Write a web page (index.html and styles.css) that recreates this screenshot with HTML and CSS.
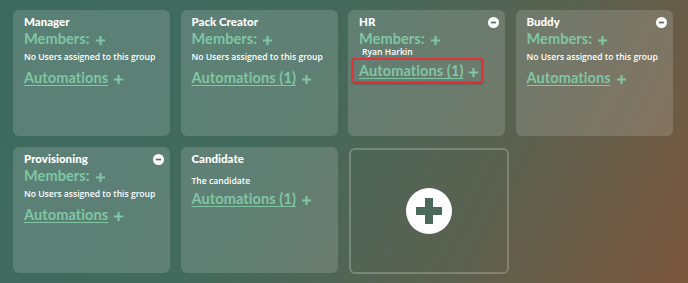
FILE: index.html
```html
<!DOCTYPE html>
<html lang="en">
<head>
  <meta charset="UTF-8" />
  <title>Groups</title>
  <link rel="stylesheet" href="styles.css">
</head>
<body>
  <main class="groups">

    <section class="group">
      <h3 class="group-title">Manager</h3>
      <div class="members">Members: <svg class="plus" viewBox="0 0 12 12"><path d="M6 1v10M1 6h10"/></svg></div>
      <p class="note">No Users assigned to this group</p>
      <div class="autos"><a href="#">Automations</a> <svg class="plus" viewBox="0 0 12 12"><path d="M6 1v10M1 6h10"/></svg></div>
    </section>

    <section class="group">
      <h3 class="group-title">Pack Creator</h3>
      <div class="members">Members: <svg class="plus" viewBox="0 0 12 12"><path d="M6 1v10M1 6h10"/></svg></div>
      <p class="note">No Users assigned to this group</p>
      <div class="autos"><a href="#">Automations (1)</a> <svg class="plus" viewBox="0 0 12 12"><path d="M6 1v10M1 6h10"/></svg></div>
    </section>

    <section class="group">
      <h3 class="group-title">HR</h3>
      <svg class="remove" viewBox="0 0 10 10"><circle cx="5" cy="5" r="5"/><path d="M2.6 5h4.8"/></svg>
      <div class="members">Members: <svg class="plus" viewBox="0 0 12 12"><path d="M6 1v10M1 6h10"/></svg></div>
      <p class="note user">Ryan Harkin</p>
      <div class="autos highlight"><a href="#">Automations (1)</a> <svg class="plus" viewBox="0 0 12 12"><path d="M6 1v10M1 6h10"/></svg></div>
    </section>

    <section class="group">
      <h3 class="group-title">Buddy</h3>
      <svg class="remove" viewBox="0 0 10 10"><circle cx="5" cy="5" r="5"/><path d="M2.6 5h4.8"/></svg>
      <div class="members">Members: <svg class="plus" viewBox="0 0 12 12"><path d="M6 1v10M1 6h10"/></svg></div>
      <p class="note">No Users assigned to this group</p>
      <div class="autos"><a href="#">Automations</a> <svg class="plus" viewBox="0 0 12 12"><path d="M6 1v10M1 6h10"/></svg></div>
    </section>

    <section class="group">
      <h3 class="group-title">Provisioning</h3>
      <svg class="remove" viewBox="0 0 10 10"><circle cx="5" cy="5" r="5"/><path d="M2.6 5h4.8"/></svg>
      <div class="members">Members: <svg class="plus" viewBox="0 0 12 12"><path d="M6 1v10M1 6h10"/></svg></div>
      <p class="note">No Users assigned to this group</p>
      <div class="autos"><a href="#">Automations</a> <svg class="plus" viewBox="0 0 12 12"><path d="M6 1v10M1 6h10"/></svg></div>
    </section>

    <section class="group">
      <h3 class="group-title">Candidate</h3>
      <p class="note desc">The candidate</p>
      <div class="autos"><a href="#">Automations (1)</a> <svg class="plus" viewBox="0 0 12 12"><path d="M6 1v10M1 6h10"/></svg></div>
    </section>

    <button class="add-group" type="button">
      <svg viewBox="0 0 46 46"><circle cx="23" cy="23" r="23" fill="#fff"/><path d="M19 10h8v9h9v8h-9v9h-8v-9h-9v-8h9z" fill="#4b6a5c"/></svg>
    </button>

  </main>
</body>
</html>
```

FILE: styles.css
```css
html, body {
  height: 100%;
}
body {
  margin: 0;
  font-family: 'Open Sans', sans-serif;
  background: linear-gradient(118deg, #3d6a5d 0%, #436a5d 40%, #5b6150 70%, #7b573d 100%);
  overflow: hidden;
}
.groups {
  display: grid;
  grid-template-columns: repeat(4, 157px);
  grid-auto-rows: 126px;
  column-gap: 10.5px;
  row-gap: 11px;
  padding: 10px 0 0 13px;
}
.group {
  position: relative;
  background: rgba(255, 255, 255, 0.15);
  border-radius: 6px;
  padding: 5px 11px 0 11px;
  box-sizing: border-box;
}
.group-title {
  margin: 0;
  font-family: 'Lato', sans-serif;
  font-weight: 900;
  font-size: 11.5px;
  line-height: 14px;
  color: #fff;
}
.remove {
  position: absolute;
  top: 7px;
  right: 6px;
  width: 11px;
  height: 11px;
}
.remove circle {
  fill: #fff;
}
.remove path {
  stroke: #5a6f64;
  stroke-width: 1.6;
}
.members,
.autos {
  font-family: 'Lato', sans-serif;
  font-weight: 700;
  font-size: 14.5px;
  color: #7fc6a5;
  display: flex;
  align-items: center;
  gap: 5px;
  letter-spacing: 0.1px;
}
.members {
  margin-top: 1px;
  line-height: 18px;
}
.autos {
  margin-top: 5px;
  line-height: 20px;
}
.autos a {
  color: #7fc6a5;
  text-decoration: underline;
  text-decoration-thickness: 1px;
  text-underline-offset: 2px;
}
.plus {
  width: 11px;
  height: 11px;
  margin-top: 3px;
}
.plus path {
  stroke: #7fc6a5;
  stroke-width: 2.4;
  fill: none;
}
.note {
  margin: 3px 0 0;
  font-size: 8.6px;
  font-weight: 600;
  line-height: 12px;
  color: #fff;
}
.note.user {
  margin: -1px 0 0 3px;
  line-height: 11px;
}
.note.desc {
  margin-top: 9px;
}
.note.desc + .autos {
  margin-top: 2px;
}
.highlight {
  margin: 0 0 0 -7px;
  padding: 1px 2px 0 5px;
  gap: 4px;
  border: 2px solid #e0343a;
  border-radius: 2px;
  box-shadow: 0 1px 2px rgba(0, 0, 0, 0.3);
  width: fit-content;
}
.add-group {
  background: transparent;
  border: 2px solid rgba(255, 255, 255, 0.22);
  border-radius: 6px;
  margin: 1px 0 0 1px;
  height: 126px;
  width: 160px;
  padding: 0;
  display: flex;
  align-items: center;
  justify-content: center;
  cursor: pointer;
}
.add-group svg {
  width: 46px;
  height: 46px;
}
```
